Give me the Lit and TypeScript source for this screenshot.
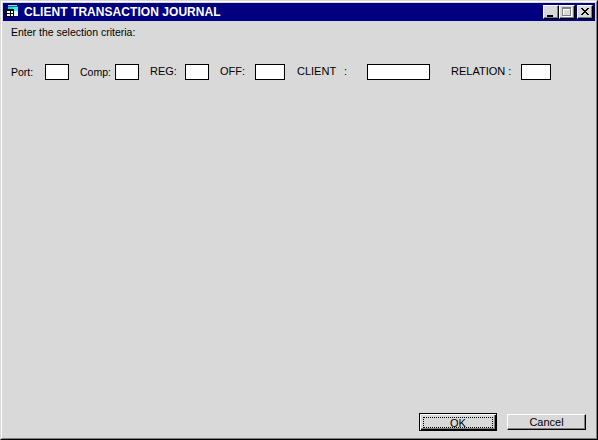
import { LitElement, html, css } from "lit";
import { customElement } from "lit/decorators.js";

interface Field { label: string; labelWidth: number; inputWidth: number; gap: number; small?: boolean; }

const FIELDS: Field[] = [
  { label: "Port:", labelWidth: 34, inputWidth: 24, gap: 11, small: true },
  { label: "Comp:", labelWidth: 35, inputWidth: 24, gap: 11, small: true },
  { label: "REG:", labelWidth: 35, inputWidth: 24, gap: 11 },
  { label: "OFF:", labelWidth: 35, inputWidth: 30, gap: 12 },
  { label: "CLIENT", labelWidth: 47, inputWidth: 63, gap: 21 },
  { label: "RELATION :", labelWidth: 70, inputWidth: 30, gap: 0 },
];

@customElement("app-root")
export class AppRoot extends LitElement {
  static styles = css`
    :host {
      display: block;
      width: 598px;
      height: 440px;
      font-family: "Liberation Sans", Arial, sans-serif;
      font-size: 11px;
      color: #000;
    }
    * { box-sizing: border-box; }
    .window {
      width: 598px;
      height: 440px;
      display: flex;
      flex-direction: column;
      background: #d9d9d9;
      border-style: solid;
      border-width: 1px;
      border-color: #d9d9d9 #000 #000 #d9d9d9;
    }
    .frame {
      flex: 1;
      display: flex;
      flex-direction: column;
      border-style: solid;
      border-width: 1px;
      border-color: #fff #808080 #808080 #fff;
      padding: 1px;
      min-height: 0;
    }
    .titlebar {
      height: 18px;
      flex: none;
      background: #000080;
      display: flex;
      align-items: center;
      padding: 0 2px 0 2px;
      color: #fff;
    }
    .app-icon { width: 16px; height: 16px; flex: none; display: block; }
    .title {
      margin-left: 3px;
      font-weight: 700;
      font-size: 12px;
      letter-spacing: 0.05px;
      white-space: nowrap;
      flex: 1;
    }
    .caps { display: flex; align-items: center; }
    .cap {
      width: 16px;
      height: 14px;
      background: #d9d9d9;
      border-style: solid;
      border-width: 1px;
      border-color: #fff #000 #000 #fff;
      box-shadow: inset -1px -1px 0 #808080;
      display: block;
      padding: 0;
    }
    .cap svg { display: block; width: 14px; height: 12px; }
    .cap.close { margin-left: 2px; }
    .content {
      flex: 1;
      display: flex;
      flex-direction: column;
      padding: 4px 8px 6px 8px;
      min-height: 0;
    }
    .hint { line-height: 14px; height: 14px; font-size: 10.5px; }
    .row {
      display: flex;
      align-items: center;
      margin-top: 25px;
      height: 16px;
    }
    .field { display: flex; align-items: center; flex: none; }
    .field label {
      display: block;
      white-space: nowrap;
      line-height: 14px;
      flex: none;
      margin-top: -2px;
    }
    .field label.small { font-size: 10.5px; margin-top: 0; }
    .box {
      height: 16px;
      flex: none;
      background: #fff;
      border: 1px solid #000;
    }
    .foot {
      margin-top: auto;
      display: flex;
      justify-content: flex-end;
      align-items: center;
      gap: 10px;
      padding-right: 1px;
    }
    .btn {
      font: inherit;
      color: #000;
      background: #d9d9d9;
      border-style: solid;
      border-width: 1px;
      border-color: #fff #000 #000 #fff;
      box-shadow: inset -1px -1px 0 #808080;
      padding: 0;
      margin: 0;
      display: flex;
      align-items: center;
      justify-content: center;
    }
    .cancel { width: 79px; height: 16px; }
    .ok {
      width: 78px;
      height: 18px;
      border: 1px solid #000;
      box-shadow: inset 1px 1px 0 #fff, inset -1px -1px 0 #000, inset -2px -2px 0 #808080;
      padding: 3px 3px 2px 3px;
    }
    .focus {
      flex: 1;
      height: 100%;
      border: 1px dotted #000;
      display: flex;
      align-items: center;
      justify-content: center;
      line-height: 10px;
    }
  `;

  render() {
    return html`
      <div class="window"><div class="frame">
        <div class="titlebar">
          <svg class="app-icon" viewBox="0 0 16 16" shape-rendering="crispEdges">
            <rect x="3" y="1" width="9" height="1" fill="#c0c0c0"/>
            <rect x="3" y="2" width="10" height="7" fill="#00e0e0"/>
            <rect x="3" y="2" width="10" height="1" fill="#008080"/>
            <rect x="8" y="3" width="5" height="4" fill="#40e8e8"/>
            <rect x="9" y="7" width="4" height="5" fill="#e0f8f8"/>
            <rect x="1" y="5" width="8" height="8" fill="#000"/>
            <rect x="2" y="7" width="3" height="2" fill="#fff"/>
            <rect x="6" y="7" width="2" height="2" fill="#fff"/>
            <rect x="2" y="10" width="3" height="2" fill="#fff"/>
            <rect x="6" y="10" width="2" height="2" fill="#fff"/>
          </svg>
          <span class="title">CLIENT TRANSACTION JOURNAL</span>
          <div class="caps">
            <button class="cap"><svg viewBox="0 0 14 12" shape-rendering="crispEdges"><rect x="3" y="9" width="6" height="2" fill="#000"/></svg></button>
            <button class="cap"><svg viewBox="0 0 14 12" shape-rendering="crispEdges"><path d="M3 2h9v9H3z M4 4v6h7V4z" fill="#fff" fill-rule="evenodd"/><path d="M2 1h9v9H2z M3 3v6h7V3z" fill="#808080" fill-rule="evenodd"/></svg></button>
            <button class="cap close"><svg viewBox="0 0 14 12" shape-rendering="crispEdges"><path d="M3 2h2v1h1v1h2V3h1V2h2v1h-1v1H9v1H8v1h1v1h1v1h1v1H9V8H8V7H6v1H5v1H3V8h1V7h1V6h1V5H5V4H4V3H3z" fill="#000"/></svg></button>
          </div>
        </div>
        <div class="content">
          <div class="hint">Enter the selection criteria:</div>
          <div class="row">
            ${FIELDS.map((f) => html`
              <div class="field" style="margin-right:${f.gap}px">
                <label class=${f.small ? "small" : ""} style="width:${f.labelWidth}px">${f.label}</label>
                ${f.label === "CLIENT" ? html`<label style="width:23px">:</label>` : ""}
                <div class="box" style="width:${f.inputWidth}px"></div>
              </div>`)}
          </div>
          <div class="foot">
            <button class="btn ok"><span class="focus">OK</span></button>
            <button class="btn cancel">Cancel</button>
          </div>
        </div>
      </div></div>
    `;
  }
}
